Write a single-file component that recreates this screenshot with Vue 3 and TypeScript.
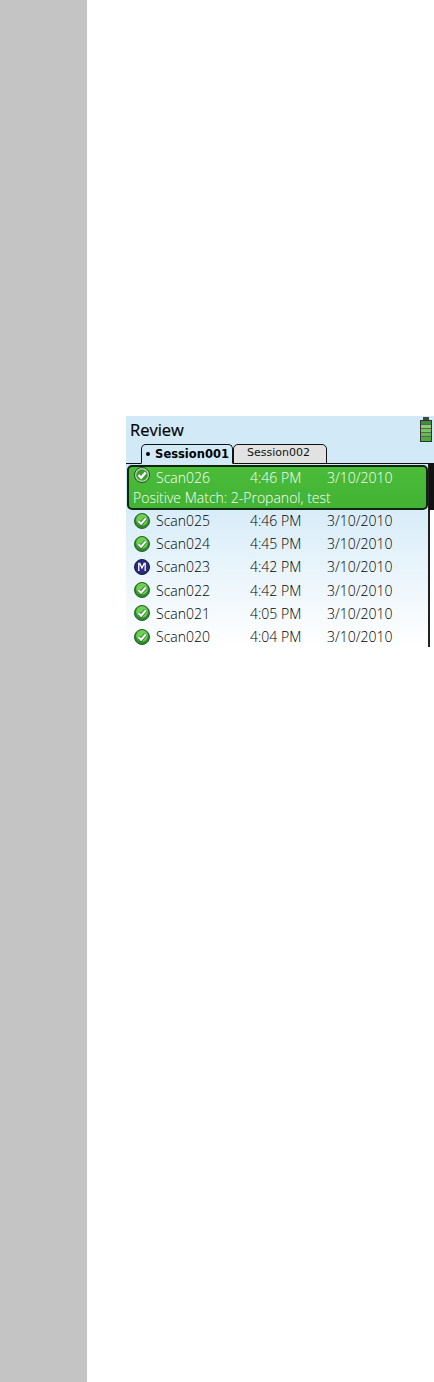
<script setup lang="ts">
interface Scan {
  name: string
  time: string
  date: string
  kind: 'ok' | 'mixture'
}

const selected: Scan = { name: 'Scan026', time: '4:46 PM', date: '3/10/2010', kind: 'ok' }

const scans: Scan[] = [
  { name: 'Scan025', time: '4:46 PM', date: '3/10/2010', kind: 'ok' },
  { name: 'Scan024', time: '4:45 PM', date: '3/10/2010', kind: 'ok' },
  { name: 'Scan023', time: '4:42 PM', date: '3/10/2010', kind: 'mixture' },
  { name: 'Scan022', time: '4:42 PM', date: '3/10/2010', kind: 'ok' },
  { name: 'Scan021', time: '4:05 PM', date: '3/10/2010', kind: 'ok' },
  { name: 'Scan020', time: '4:04 PM', date: '3/10/2010', kind: 'ok' }
]
</script>

<template>
  <div class="page">
    <aside class="margin"></aside>
    <main class="content">
      <section class="screen">
        <header class="header">
          <div class="title-row">
            <h1 class="title">Review</h1>
            <svg class="battery" width="12" height="25" viewBox="0 0 12 25">
              <rect x="3" y="0" width="6" height="3" fill="#444" />
              <rect x="0.5" y="3.5" width="11" height="21" fill="#5cb84a" stroke="#333" />
              <rect x="1" y="4" width="10" height="3.5" fill="#3f8f3a" />
              <rect x="1" y="8" width="10" height="3" fill="#86d070" />
              <rect x="1" y="12" width="10" height="3" fill="#76c862" />
              <rect x="1" y="16" width="10" height="3" fill="#62bd50" />
              <rect x="1" y="20" width="10" height="4" fill="#4cae3e" />
              <path d="M1 7.5h10M1 11.5h10M1 15.5h10M1 19.5h10" stroke="#6b5a5a" />
            </svg>
          </div>
          <div class="tabs">
            <div class="tab active"><span class="dot"></span>Session001</div>
            <div class="tab">Session002</div>
          </div>
        </header>

        <div class="list">
          <div class="scrollbar"><div class="thumb"></div></div>
          <div class="selected">
            <div class="row">
              <svg class="icon" viewBox="0 0 16 16">
                <circle cx="8" cy="8" r="7.5" fill="#b9dcb4" stroke="#1d4f1c" />
                <circle cx="8" cy="8" r="5.8" fill="#3f9c35" />
                <path d="M4.6 8.2l2.5 2.5 4.6-5.2" fill="none" stroke="#fff" stroke-width="2.4" />
              </svg>
              <span class="name">{{ selected.name }}</span>
              <span>{{ selected.time }}</span>
              <span>{{ selected.date }}</span>
            </div>
            <div class="detail">Positive Match: 2-Propanol, test</div>
          </div>

          <div v-for="scan in scans" :key="scan.name" class="row item">
            <svg v-if="scan.kind === 'ok'" class="icon" viewBox="0 0 16 16">
              <circle cx="8" cy="8" r="7.5" fill="#2f8a2c" stroke="#24602a" />
              <circle cx="8" cy="6.8" r="5.8" fill="#6fcf50" />
              <path d="M4.6 8.2l2.5 2.5 4.6-5.2" fill="none" stroke="#1f6d22" stroke-width="3.6" />
              <path d="M4.6 8.2l2.5 2.5 4.6-5.2" fill="none" stroke="#fff" stroke-width="2.2" />
            </svg>
            <svg v-else class="icon" viewBox="0 0 16 16">
              <circle cx="8" cy="8" r="7.5" fill="#2a2a80" stroke="#15154a" />
              <path d="M4.8 12V4.5h1L8 9l2.2-4.5h1V12" fill="none" stroke="#fff" stroke-width="1.3" />
            </svg>
            <span class="name">{{ scan.name }}</span>
            <span>{{ scan.time }}</span>
            <span>{{ scan.date }}</span>
          </div>
        </div>
      </section>
    </main>
  </div>
</template>

<style>
html,
body {
  background: #fff;
}
</style>

<style scoped>
.page {
  display: flex;
  height: 1382px;
  overflow: hidden;
  font-family: "Open Sans", "DejaVu Sans", sans-serif;
  font-weight: 300;
}

.margin {
  width: 87px;
  flex: none;
  background: #c4c4c4;
}

.content {
  flex: 1;
  padding: 416px 0 0 39px;
}

.screen {
  width: 308px;
  height: 231px;
  display: flex;
  flex-direction: column;
  background: #d2e9f7;
}

.header {
  height: 47px;
  flex: none;
  display: flex;
  flex-direction: column;
  border-bottom: 1px solid #111;
}

.title-row {
  height: 28px;
  display: flex;
  justify-content: space-between;
  align-items: flex-start;
  padding: 1px 2px 0 4px;
}

.title {
  margin: 0;
  font-size: 16.5px;
  line-height: 26px;
  font-weight: 400;
  color: #000;
  -webkit-text-stroke: 0.2px #000;
}

.tabs {
  display: flex;
  align-items: flex-end;
  padding-left: 15px;
  margin-bottom: -1px;
}

.tab {
  width: 94px;
  height: 20px;
  box-sizing: border-box;
  border: 1px solid #111;
  border-radius: 5px 5px 0 0;
  background: #e2e2e2;
  font-size: 11px;
  line-height: 15px;
  padding-right: 3px;
  text-align: center;
  font-family: "DejaVu Sans", sans-serif;
  font-weight: 400;
  color: #111;
}

.tab.active {
  width: 92px;
  padding-right: 0;
  padding-left: 1px;
  background: #d2e9f7;
  border-bottom-color: #d2e9f7;
  font-size: 11.5px;
  line-height: 18px;
  font-weight: 700;
  color: #000;
  position: relative;
  z-index: 1;
}

.dot {
  display: inline-block;
  width: 4px;
  height: 4px;
  border-radius: 50%;
  background: #000;
  margin-right: 5px;
  vertical-align: 2px;
}

.list {
  position: relative;
  flex: 1;
  min-height: 0;
  overflow: hidden;
  background: linear-gradient(#cbe6f6, #fff);
  padding: 1px 6px 0 1px;
}

.scrollbar {
  position: absolute;
  top: 0;
  bottom: 0;
  right: 0;
  width: 6px;
  background: #fff;
  border-left: 2px solid #222;
  box-sizing: border-box;
}

.thumb {
  position: absolute;
  top: 0;
  left: -1px;
  width: 5px;
  height: 46px;
  background: #111;
}

.selected {
  height: 45px;
  box-sizing: border-box;
  border: 2px solid #10240e;
  border-radius: 5px;
  background: linear-gradient(#4abc38, #42b234);
  color: #fff;
  margin-bottom: -1px;
}

.row {
  display: grid;
  grid-template-columns: 16px 100px 77px auto;
  align-items: center;
  height: 23px;
  font-size: 14px;
  color: #000;
  padding-left: 7px;
}

.selected .row {
  height: 21px;
  color: #fff;
  padding-left: 5px;
}

.selected .icon {
  align-self: start;
}

.item {
  height: 23.2px;
}

.icon {
  width: 16px;
  height: 16px;
}

.name {
  padding-left: 6px;
}

.detail {
  font-size: 14px;
  line-height: 20px;
  padding-left: 4px;
}
</style>
